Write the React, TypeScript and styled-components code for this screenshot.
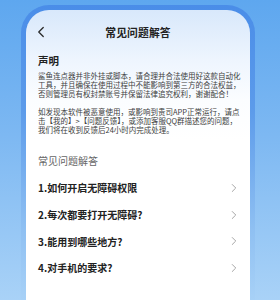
import React from "react";
import styled, { createGlobalStyle } from "styled-components";
import { ChevronLeft, ChevronRight } from "lucide-react";

const Global = createGlobalStyle`
  html, body { margin: 0; padding: 0; }
  body {
    width: 280px;
    height: 300px;
    overflow: hidden;
    font-family: "Noto Sans CJK SC", "Noto Sans", sans-serif;
    background: linear-gradient(180deg, #5ea7ef 0%, #7db8f2 45%, #a9d2f7 100%);
  }
`;

const Stage = styled.div`
  width: 280px;
  height: 300px;
  padding: 5px 25px 0 21px;
  box-sizing: border-box;
`;

const Phone = styled.div`
  height: 300px;
  box-sizing: border-box;
  padding: 5px 5px 0 5px;
  border-radius: 28px 28px 0 0;
  background: linear-gradient(180deg, #4a8de8 0%, #5c9bea 35%, #8fc0f2 75%, #a9d2f7 100%);
`;

const Screen = styled.div`
  height: 100%;
  border-radius: 23px 23px 0 0;
  background: linear-gradient(180deg, #d8e8fb 0px, #eef5fe 50px, #fbfdff 90px, #ffffff 130px);
  display: flex;
  flex-direction: column;
`;

const Header = styled.div`
  height: 44px;
  display: grid;
  grid-template-columns: 40px 1fr 40px;
  align-items: center;
  padding-left: 6px;
  padding-right: 6px;
`;

const Back = styled.div`
  display: flex;
  align-items: center;
  color: #2a2a2a;
`;

const Title = styled.div`
  text-align: center;
  font-size: 10.8px;
  font-weight: 600;
  color: #222;
  letter-spacing: 0.1px;
`;

const Body = styled.div`
  padding: 0 10px 0 12px;
  display: flex;
  flex-direction: column;
`;

const SectionTitle = styled.div`
  font-size: 10.5px;
  font-weight: 700;
  line-height: 12px;
  color: #222;
  margin-top: 1px;
  margin-bottom: 3.5px;
`;

const Para = styled.div<{ $gap?: number }>`
  font-size: 7.5px;
  line-height: 9.1px;
  color: #404040;
  margin-top: ${(p) => p.$gap ?? 0}px;
`;

const Line = styled.span`
  display: block;
  white-space: nowrap;
`;

const FaqHeading = styled.div`
  font-size: 10px;
  line-height: 14px;
  color: #666;
  margin-top: 19.5px;
  margin-bottom: 6.6px;
`;

const FaqItem = styled.div`
  height: 26.7px;
  display: flex;
  align-items: center;
  justify-content: space-between;
  font-size: 10px;
  font-weight: 700;
  color: #222;
`;

const Arrow = styled.span`
  display: flex;
  color: #9a9a9a;
  margin-right: -1px;
`;

const faqs = [
  "1.如何开启无障碍权限",
  "2.每次都要打开无障碍?",
  "3.能用到哪些地方?",
  "4.对手机的要求?",
];

export default function App() {
  return (
    <>
      <Global />
      <Stage>
        <Phone>
          <Screen>
            <Header>
              <Back>
                <ChevronLeft size={18} strokeWidth={1.7} />
              </Back>
              <Title>常见问题解答</Title>
              <span />
            </Header>
            <Body>
              <SectionTitle>声明</SectionTitle>
              <Para>
                <Line>鲨鱼连点器并非外挂或脚本，请合理并合法使用好这款自动化</Line>
                <Line>工具，并且确保在使用过程中不能影响到第三方的合法权益，</Line>
                <Line>否则管理员有权封禁账号并保留法律追究权利，谢谢配合！</Line>
              </Para>
              <Para $gap={9.4}>
                <Line>如发现本软件被恶意使用，或影响到贵司APP正常运行，请点</Line>
                <Line>击【我的】&gt;【问题反馈】，或添加客服QQ群描述您的问题，</Line>
                <Line>我们将在收到反馈后24小时内完成处理。</Line>
              </Para>
              <FaqHeading>常见问题解答</FaqHeading>
              {faqs.map((f) => (
                <FaqItem key={f}>
                  <span>{f}</span>
                  <Arrow>
                    <ChevronRight size={14} strokeWidth={1.5} />
                  </Arrow>
                </FaqItem>
              ))}
            </Body>
          </Screen>
        </Phone>
      </Stage>
    </>
  );
}
